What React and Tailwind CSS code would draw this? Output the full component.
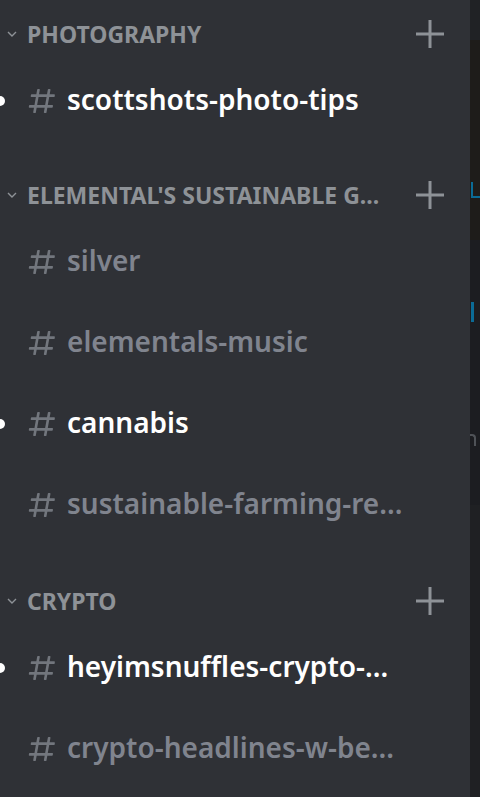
import React from 'react'

const SECTIONS = [
  {
    name: "PHOTOGRAPHY",
    gap: 'pt-[8px]',
    channels: [{ name: 'scottshots-photo-tips', unread: true }],
  },
  {
    name: "ELEMENTAL'S SUSTAINABLE G...",
    gap: 'pt-[28px]',
    channels: [
      { name: 'silver' },
      { name: 'elementals-music' },
      { name: 'cannabis', unread: true },
      { name: 'sustainable-farming-re...' },
    ],
  },
  {
    name: 'CRYPTO',
    gap: 'pt-[30px]',
    channels: [
      { name: 'heyimsnuffles-crypto-...', unread: true },
      { name: 'crypto-headlines-w-be...' },
    ],
  },
]

function HashIcon() {
  return (
    <svg width="32" height="32" viewBox="0 0 24 24" className="shrink-0 text-[#72767d]">
      <path
        fill="currentColor"
        fillRule="evenodd"
        d="M5.89 21c-.31 0-.55-.28-.5-.59L6 17H2.6c-.31 0-.55-.28-.5-.59l.18-1c.04-.24.25-.41.49-.41h3.58l1.06-6H4.01c-.31 0-.55-.28-.5-.59l.18-1c.04-.24.25-.41.49-.41h3.58l.64-3.59c.04-.24.25-.41.49-.41h.98c.31 0 .55.28.5.59L9.76 7h6l.64-3.59c.04-.24.25-.41.49-.41h.98c.31 0 .55.28.5.59L17.76 7h3.4c.31 0 .55.28.5.59l-.18 1c-.04.24-.25.41-.49.41h-3.58l-1.06 6h3.4c.31 0 .55.28.5.59l-.18 1c-.04.24-.25.41-.49.41H16l-.64 3.59c-.04.24-.25.41-.49.41h-.98c-.31 0-.55-.28-.5-.59L14 17H8l-.64 3.59c-.04.24-.25.41-.49.41h-.98zM9.41 9l-1.06 6h6l1.06-6h-6z"
      />
    </svg>
  )
}

function Chevron() {
  return (
    <svg width="12" height="12" viewBox="0 0 12 12" className="shrink-0 text-[#8e9297]">
      <path d="M2 4l4 4 4-4" fill="none" stroke="currentColor" strokeWidth="1.4" />
    </svg>
  )
}

function Plus() {
  return (
    <svg width="30" height="30" viewBox="0 0 30 30" className="shrink-0 text-[#8e9297]">
      <path d="M15 1v28M1 15h28" stroke="currentColor" strokeWidth="3" />
    </svg>
  )
}

function Channel({ channel }) {
  return (
    <div className="relative h-[81px] flex items-center">
      {channel.unread && (
        <div className="absolute left-[-5px] top-1/2 -translate-y-1/2 w-[10px] h-[10px] rounded-full bg-white" />
      )}
      <div className="ml-[26px]">
        <HashIcon />
      </div>
      <span
        className={`ml-[9px] pb-[3px] whitespace-nowrap text-[28px] font-semibold leading-none ${
          channel.unread ? 'text-white' : 'text-[#80848e]'
        }`}
      >
        {channel.name}
      </span>
    </div>
  )
}

function Section({ section }) {
  return (
    <div className={section.gap}>
      <div className="h-[52px] flex items-center">
        <div className="ml-[5px] w-[14px] flex justify-center">
          <Chevron />
        </div>
        <span className="ml-[8px] flex-1 whitespace-nowrap text-[23px] font-bold leading-none text-[#8e9297]">
          {section.name}
        </span>
        <div className="mr-[25px]">
          <Plus />
        </div>
      </div>
      {section.channels.map((c) => (
        <Channel key={c.name} channel={c} />
      ))}
    </div>
  )
}

export default function App() {
  return (
    <div
      className="w-[480px] h-[797px] flex overflow-hidden bg-[#2f3136]"
      style={{ fontFamily: '"Noto Sans", "Open Sans", sans-serif' }}
    >
      <div className="w-[470px] shrink-0 bg-[#2f3136]">
        {SECTIONS.map((s) => (
          <Section key={s.name} section={s} />
        ))}
      </div>

      {/* sliver of the chat view behind */}
      <div className="flex-1 flex flex-col overflow-hidden">
        <div className="h-[40px] bg-[#202225]" />
        <div className="h-[200px] bg-[#1e1c1a] flex flex-col">
          <div className="mt-[142px] ml-[1px] w-[9px] h-[16px] border-l-2 border-b-2 border-[#0b6b96]" />
        </div>
        <div className="h-[265px] bg-[#1c1d21] flex flex-col">
          <div className="mt-[62px] ml-[1px] w-[3px] h-[20px] bg-[#0b6b96]" />
          <div className="mt-[112px] w-[6px] h-[12px] border-t-2 border-r-2 rounded-tr-[4px] border-[#4f5257]" />
        </div>
        <div className="flex-1 bg-[#1f2023]" />
      </div>
    </div>
  )
}
